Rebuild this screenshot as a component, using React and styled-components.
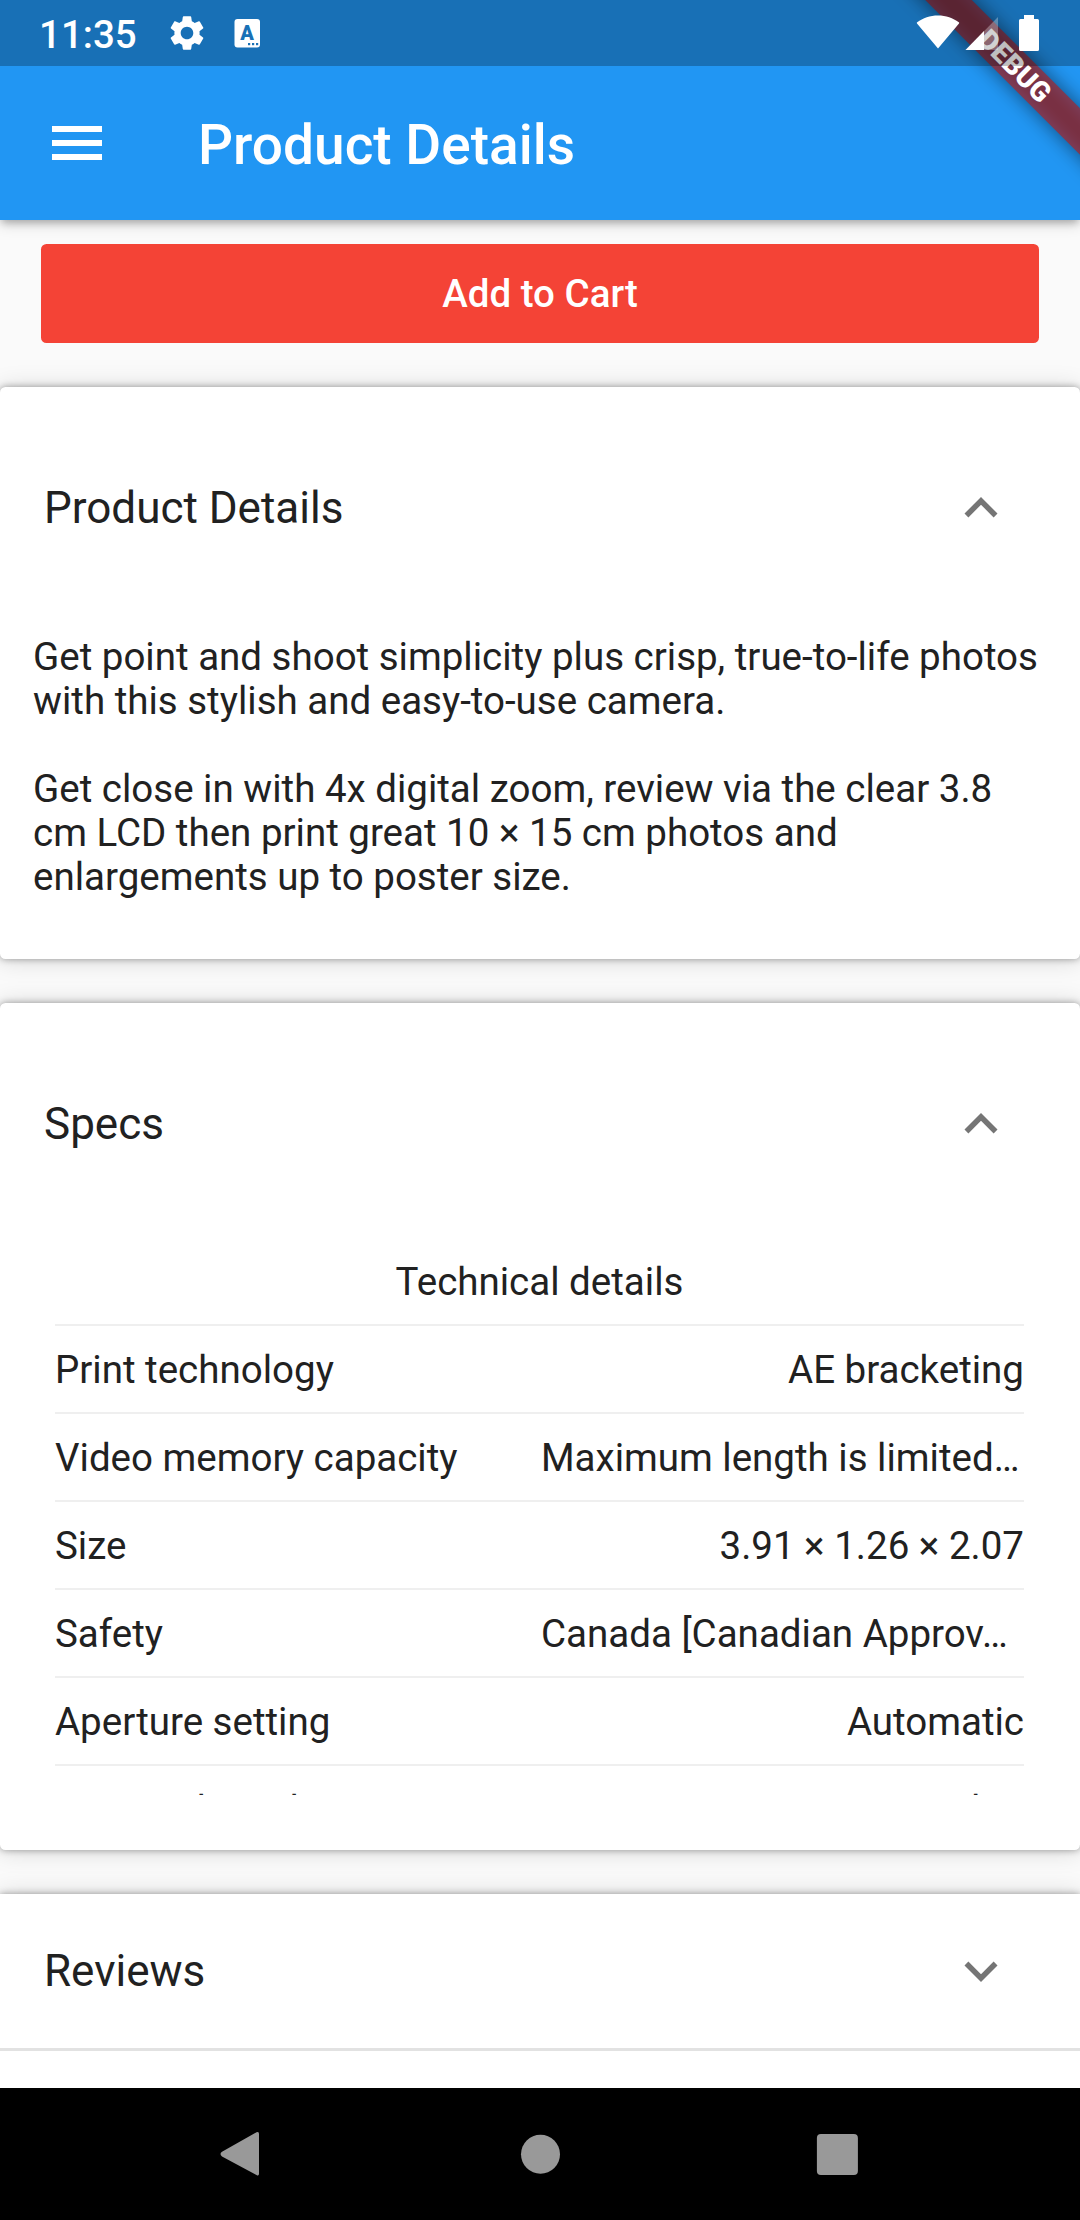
import React from 'react';
import styled, { createGlobalStyle } from 'styled-components';
import { MdSettings, MdExpandLess, MdExpandMore } from 'react-icons/md';

const GlobalStyle = createGlobalStyle`
  * { box-sizing: border-box; }
  body { margin: 0; background: #fafafa; }
`;

const Screen = styled.div`
  position: relative;
  width: 1080px;
  height: 2220px;
  display: flex;
  flex-direction: column;
  overflow: hidden;
  background: #fafafa;
  color: #212121;
  font-family: Roboto, "Liberation Sans", sans-serif;
  font-size: 38.5px;
  line-height: 44px;
`;

const StatusBar = styled.div`
  position: relative;
  z-index: 3;
  flex: none;
  height: 66px;
  padding: 0 41px 0 39px;
  display: flex;
  align-items: center;
  background: rgba(0, 0, 0, 0.25);
  color: #fff;
`;

const Clock = styled.span`
  width: 127px;
  font-size: 38.5px;
  font-weight: 500;
  padding-top: 3px;
`;

const StatusIcon = styled.svg`
  display: block;
  flex: none;
  width: ${(p) => p.$w}px;
  height: 66px;
  margin-left: ${(p) => p.$gap || 0}px;
`;

const Gear = styled(MdSettings)`
  width: 42px;
  height: 42px;
  flex: none;
`;

const Spacer = styled.div`
  flex: 1;
`;

const AppBar = styled.header`
  position: relative;
  z-index: 1;
  flex: none;
  height: 220px;
  margin-top: -66px;
  padding: 66px 44px 0 52px;
  display: flex;
  align-items: center;
  background: #2196f3;
  box-shadow: 0 5px 7px -2px rgba(0, 0, 0, 0.2), 0 3px 14px rgba(0, 0, 0, 0.2);
`;

const MenuButton = styled.div`
  width: 50px;
  height: 34px;
  margin-right: 96px;
  display: flex;
  flex-direction: column;
  justify-content: space-between;
`;

const MenuLine = styled.span`
  height: 6px;
  background: #fff;
`;

const Title = styled.h1`
  margin: 0;
  padding-top: 4px;
  color: #fff;
  font-size: 55px;
  font-weight: 500;
  line-height: 64px;
`;

const BannerClip = styled.div`
  position: absolute;
  z-index: 2;
  top: 0;
  right: 0;
  width: 220px;
  height: 220px;
  overflow: hidden;
  pointer-events: none;
`;

const Ribbon = styled.div`
  position: absolute;
  left: 4px;
  top: 49px;
  width: 300px;
  height: 33px;
  padding-left: 2px;
  transform: rotate(45deg);
  display: flex;
  align-items: center;
  justify-content: center;
  color: #fff;
  font-size: 28px;
  font-weight: 900;
  line-height: 33px;

  &::before,
  &::after {
    content: '';
    position: absolute;
    inset: 0;
    z-index: -1;
  }
  &::before {
    background: rgba(0, 0, 0, 0.5);
    filter: blur(10px);
  }
  &::after {
    background: rgba(183, 28, 28, 0.627);
  }
`;

const Content = styled.main`
  flex: 1;
  min-height: 0;
  overflow: hidden;
  display: flex;
  flex-direction: column;
`;

const CartButton = styled.button`
  flex: none;
  height: 99px;
  margin: 24px 41px 44px;
  padding: 0;
  border: 0;
  border-radius: 5.5px;
  background: #f44336;
  color: #fff;
  font: 500 38.5px/44px Roboto, "Liberation Sans", sans-serif;
`;

const Panel = styled.section`
  flex: none;
  display: flex;
  flex-direction: column;
  height: ${(p) => p.$height}px;
  margin-bottom: 44px;
  border-radius: ${(p) => (p.$square ? 0 : 5.5)}px;
  background: #fff;
  box-shadow: 0 0 7px rgba(0, 0, 0, 0.36), 0 1px 24px rgba(0, 0, 0, 0.15);
`;

const PanelHeader = styled.div`
  flex: none;
  height: ${(p) => (p.$open ? 242 : 154)}px;
  padding: 0 66px 0 44px;
  display: flex;
  align-items: center;
  justify-content: space-between;
  font-size: 44px;
  line-height: 52px;

  svg {
    width: 66px;
    height: 66px;
    color: #757575;
  }
`;

const Description = styled.div`
  padding: 6px 33px 0;
  display: flex;
  flex-direction: column;
  gap: 44px;

  p { margin: 0; }
`;

const SpecTable = styled.div`
  height: 550px;
  margin: 0 56px 0 55px;
  overflow: hidden;
`;

const SpecCaption = styled.div`
  height: 81px;
  padding-top: 15px;
  border-bottom: 2px solid #efefef;
  text-align: center;
`;

const SpecRow = styled.div`
  height: 88px;
  padding-top: 22px;
  border-bottom: 2px solid #efefef;
  display: grid;
  grid-template-columns: 1fr auto;
`;

const SpecValue = styled.span`
  width: ${(p) => (p.$wide ? '483px' : 'auto')};
  white-space: nowrap;
`;

const Divider = styled.div`
  flex: none;
  height: 3px;
  background: #e2e2e2;
`;

const NavBar = styled.nav`
  position: relative;
  z-index: 1;
  flex: none;
  height: 132px;
  padding: 0 200px;
  display: flex;
  align-items: center;
  justify-content: space-between;
  background: #000;

  svg {
    width: 82px;
    height: 82px;
    fill: #999;
  }
`;

const specs = [
  { name: 'Print technology', value: 'AE bracketing' },
  { name: 'Video memory capacity', value: 'Maximum length is limited…', wide: true },
  { name: 'Size', value: '3.91 × 1.26 × 2.07' },
  { name: 'Safety', value: 'Canada [Canadian Approv…', wide: true },
  { name: 'Aperture setting', value: 'Automatic' },
  { name: 'Sensor data chip', value: 'Analog' },
];

export default function App() {
  return (
    <Screen>
      <GlobalStyle />
      <StatusBar>
        <Clock>11:35</Clock>
        <Gear />
        <StatusIcon $w={27} $gap={26} viewBox="0 0 27 66">
          <rect x="0.5" y="19" width="25.5" height="28.5" rx="3" fill="#fff" />
          <text x="13" y="40" textAnchor="middle" fontFamily="Roboto" fontWeight="900" fontSize="20" fill="#1971b6">A</text>
          <g fill="#1971b6">
            <rect x="14" y="43" width="2.2" height="2.2" />
            <rect x="18" y="43" width="2.2" height="2.2" />
            <rect x="22" y="43" width="2.2" height="2.2" />
          </g>
        </StatusIcon>
        <Spacer />
        <StatusIcon $w={44} viewBox="0 0 44 66">
          <path d="M22 48.5L1 23.5C0.6 23 0.7 22.6 1.2 22.3C7 18 14 15.5 22 15.5S37 18 42.8 22.3C43.3 22.6 43.4 23 43 23.5Z" fill="#fff" />
        </StatusIcon>
        <StatusIcon $w={34} $gap={5} viewBox="0 0 34 66">
          <path d="M0.5 50L33 17V50Z" fill="#fff" fillOpacity="0.3" />
          <path d="M0.5 50L19 31V50Z" fill="#fff" />
        </StatusIcon>
        <StatusIcon $w={20} $gap={20} viewBox="0 0 20 66">
          <path d="M5 15H15V19H18.5Q20 19 20 20.5V49.5Q20 51 18.5 51H1.5Q0 51 0 49.5V20.5Q0 19 1.5 19H5Z" fill="#fff" />
        </StatusIcon>
      </StatusBar>
      <AppBar>
        <MenuButton>
          <MenuLine />
          <MenuLine />
          <MenuLine />
        </MenuButton>
        <Title>Product Details</Title>
      </AppBar>
      <BannerClip>
        <Ribbon>DEBUG</Ribbon>
      </BannerClip>
      <Content>
        <CartButton>Add to Cart</CartButton>
        <Panel $height={572}>
          <PanelHeader $open>
            <span>Product Details</span>
            <MdExpandLess />
          </PanelHeader>
          <Description>
            <p>
              Get point and shoot simplicity plus crisp, true-to-life photos with this stylish and easy-to-use camera.
            </p>
            <p>
              Get close in with 4x digital zoom, review via the clear 3.8 cm LCD then print great 10 × 15 cm photos and
              enlargements up to poster size.
            </p>
          </Description>
        </Panel>
        <Panel $height={847}>
          <PanelHeader $open>
            <span>Specs</span>
            <MdExpandLess />
          </PanelHeader>
          <SpecTable>
            <SpecCaption>Technical details</SpecCaption>
            {specs.map(({ name, value, wide }) => (
              <SpecRow key={name}>
                <span>{name}</span>
                <SpecValue $wide={wide}>{value}</SpecValue>
              </SpecRow>
            ))}
          </SpecTable>
        </Panel>
        <Panel $height={240} $square>
          <PanelHeader>
            <span>Reviews</span>
            <MdExpandMore />
          </PanelHeader>
          <Divider />
        </Panel>
      </Content>
      <NavBar>
        <svg viewBox="0 0 82 82">
          <path d="M56.5 19.3Q59 18 59 21V60.5Q59 63.5 56.5 62L22 43.5Q19 41 22 38.8Z" />
        </svg>
        <svg viewBox="0 0 82 82">
          <circle cx="41.5" cy="41.3" r="19.5" />
        </svg>
        <svg viewBox="0 0 82 82">
          <rect x="18.9" y="21" width="41" height="41" rx="4" />
        </svg>
      </NavBar>
    </Screen>
  );
}
